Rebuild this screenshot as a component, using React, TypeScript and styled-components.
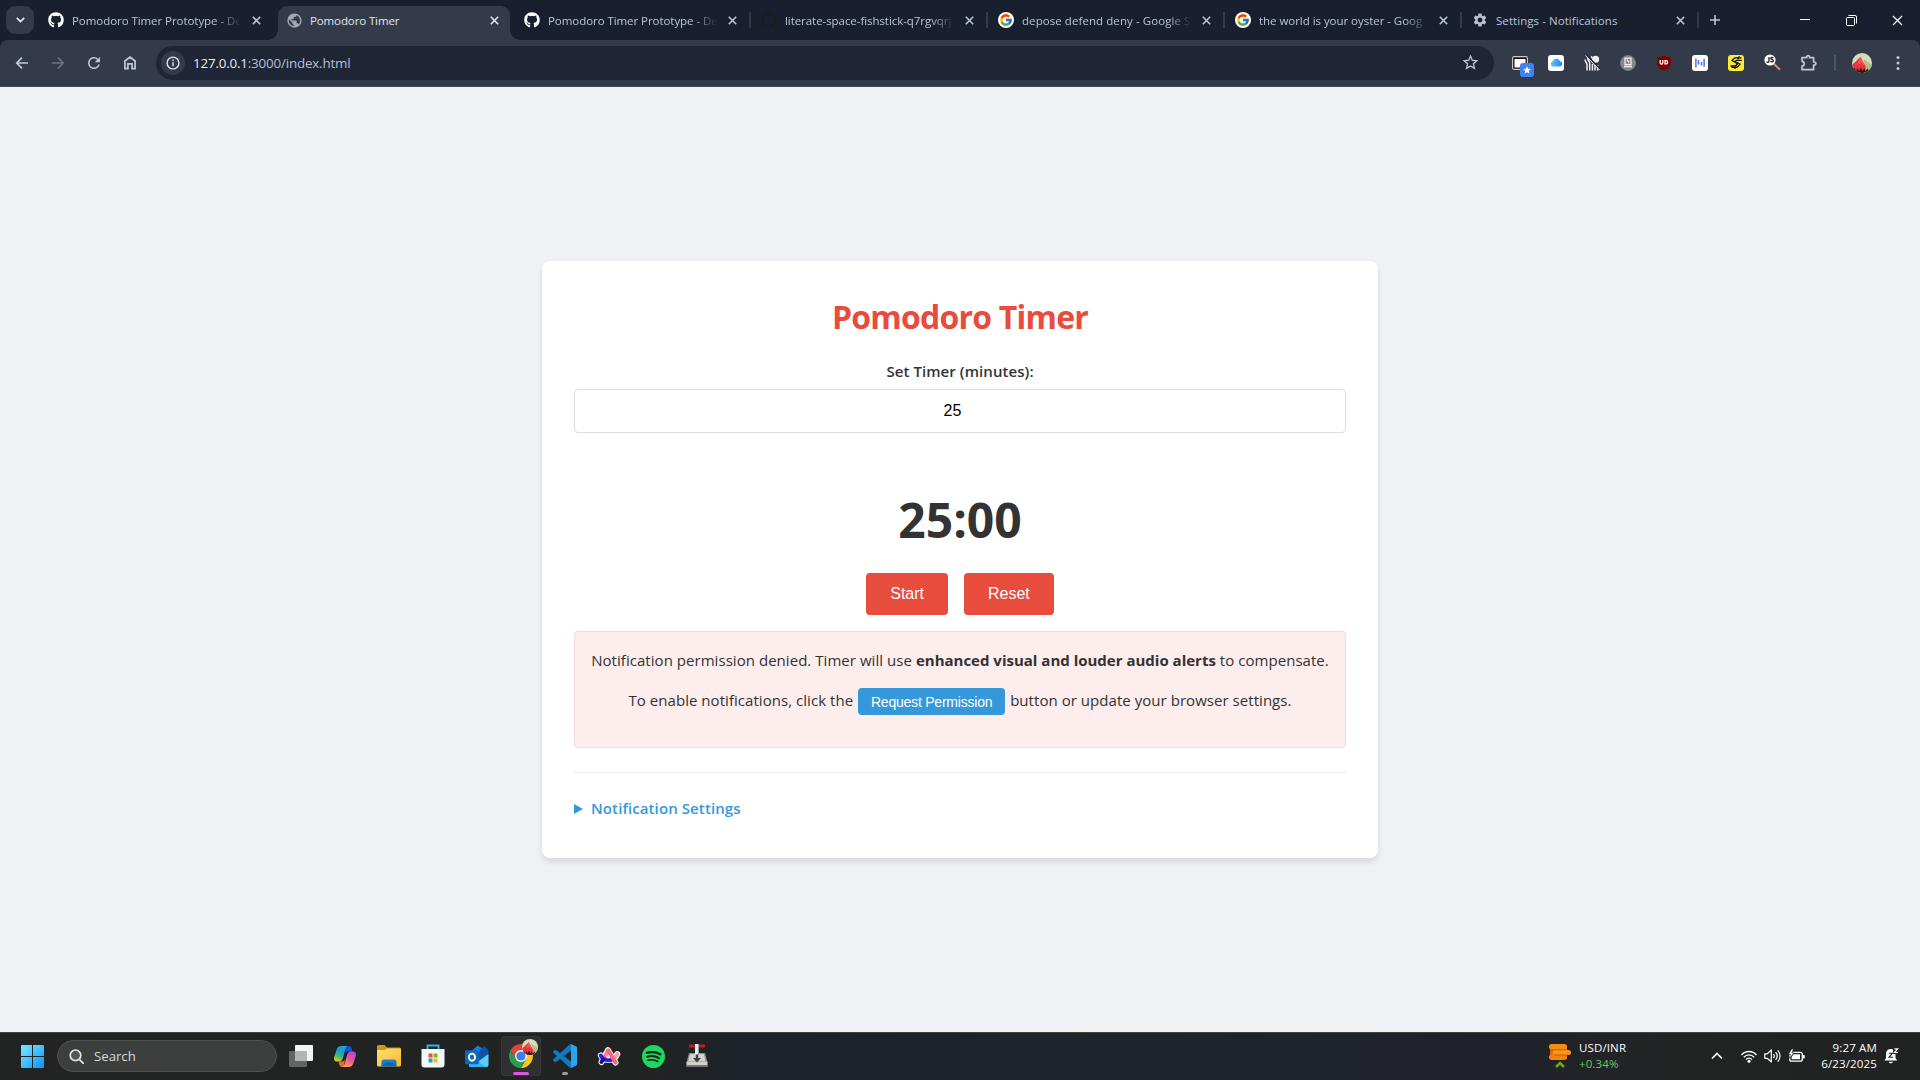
import React from 'react';
import styled, { createGlobalStyle, css } from 'styled-components';
import { FaGithub } from 'react-icons/fa';
import { FcGoogle } from 'react-icons/fc';
import { MdPublic, MdSettings, MdStarBorder, MdRefresh } from 'react-icons/md';

const ui = '"Open Sans", "Noto Sans", sans-serif';
const arial = '"Liberation Sans", Arial, sans-serif';

const GlobalStyle = createGlobalStyle`
  *, *::before, *::after { box-sizing: border-box; }
  body { margin: 0; background: #f0f1f5; overflow: hidden; }
  svg { display: block; flex: none; }
`;

const Screen = styled.div`
  display: flex;
  flex-direction: column;
  width: 1920px;
  height: 1080px;
  overflow: hidden;
  font-family: ${ui};
`;

/* ---------- Browser tab strip ---------- */

const TabStrip = styled.header`
  display: flex;
  flex: none;
  height: 40px;
  padding-left: 6px;
  background: #182030;
  color: #bcc3d9;
`;

const TabSearch = styled.button`
  display: grid;
  place-items: center;
  width: 28px;
  height: 28px;
  margin: 6px 6px 0 0;
  padding: 0;
  border: 0;
  border-radius: 9px;
  background: #333b4b;
  color: #e4e7ef;
`;

const TabList = styled.div`
  display: flex;
  gap: 5px;
  padding-top: 6px;
`;

const Tab = styled.div<{ $active?: boolean; $divided?: boolean }>`
  position: relative;
  display: flex;
  align-items: center;
  width: 232px;
  height: 34px;
  margin-right: ${p => (p.$divided ? 0 : 1)}px;
  padding: 0 8px 6px;
  ${p => p.$active && css`
    background: #333b4b;
    color: #e3e6ee;
    border-radius: 9px 9px 0 0;
    &::before, &::after {
      content: '';
      position: absolute;
      bottom: 0;
      width: 10px;
      height: 10px;
    }
    &::before {
      left: -10px;
      background: radial-gradient(circle at 0 0, transparent 9.5px, #333b4b 10px);
    }
    &::after {
      right: -10px;
      background: radial-gradient(circle at 100% 0, transparent 9.5px, #333b4b 10px);
    }
  `}
  ${p => p.$divided && css`
    &::after {
      content: '';
      position: absolute;
      right: -3px;
      top: 6px;
      width: 2px;
      height: 16px;
      background: #333b4b;
    }
  `}
`;

const Favicon = styled.span<{ $color?: string; $disc?: boolean }>`
  display: grid;
  place-items: center;
  flex: none;
  width: 16px;
  height: 16px;
  margin-right: 8px;
  border-radius: 50%;
  color: ${p => p.$color || '#fff'};
  background: ${p => (p.$disc ? '#fff' : 'transparent')};
`;

const TabTitle = styled.span<{ $spacing: number; $fade?: boolean }>`
  flex: none;
  width: 172px;
  padding-top: 1px;
  white-space: nowrap;
  font-size: 11.5px;
  line-height: 20px;
  letter-spacing: ${p => p.$spacing}px;
  ${p => p.$fade && css`
    -webkit-mask-image: linear-gradient(90deg, #000 146px, transparent 169px);
    mask-image: linear-gradient(90deg, #000 146px, transparent 169px);
  `}
`;

const TabClose = styled.span`
  display: grid;
  place-items: center;
  width: 16px;
  height: 16px;
  margin-left: 4px;
`;

const NewTab = styled.div`
  display: grid;
  place-items: center;
  width: 28px;
  height: 28px;
  margin: 6px 0 0 5px;
`;

const WindowControls = styled.div`
  display: flex;
  margin-left: auto;
  color: #fff;
`;

const WindowButton = styled.div`
  display: grid;
  place-items: center;
  width: 46px;
  height: 40px;
`;

/* ---------- Browser toolbar ---------- */

const ToolbarFrame = styled.div`
  flex: none;
  background: #182030;
`;

const Toolbar = styled.div`
  display: flex;
  align-items: center;
  height: 47px;
  padding: 0 4px 1px;
  border-bottom: 1px solid #474e5c;
  border-radius: 8px 8px 0 0;
  background: #333b4b;
  color: #c0c7dc;
`;

const NavButton = styled.div<{ $dim?: boolean }>`
  display: grid;
  place-items: center;
  width: 36px;
  height: 34px;
  color: ${p => (p.$dim ? '#6c7384' : '#c0c7dc')};
`;

const Omnibox = styled.div`
  display: flex;
  align-items: center;
  width: 1338px;
  height: 34px;
  margin: 0 8px;
  padding: 0 14px 0 5px;
  border-radius: 17px;
  background: #1e2636;
`;

const SiteInfo = styled.div`
  display: grid;
  place-items: center;
  width: 24px;
  height: 24px;
  margin-right: 8px;
  border-radius: 50%;
  background: #333b4b;
  color: #e1e4ec;
`;

const Url = styled.div`
  flex: 1;
  font-size: 13.4px;
  line-height: 20px;
  letter-spacing: -0.19px;
  color: #b7bed3;
`;

const UrlHost = styled.span`
  color: #e9ebf2;
`;

const Extension = styled.div`
  position: relative;
  display: grid;
  place-items: center;
  width: 36px;
  height: 34px;
`;

const ExtensionBadge = styled.span`
  position: absolute;
  left: 18px;
  top: 17px;
  display: grid;
  place-items: center;
  width: 14px;
  height: 14px;
  border-radius: 3px;
  background: #3f83f1;
`;

const ExtensionTile = styled.span<{ $bg: string }>`
  display: grid;
  place-items: center;
  width: 16px;
  height: 16px;
  border-radius: 3px;
  background: ${p => p.$bg};
`;

const ToolbarDivider = styled.div`
  width: 2px;
  height: 16px;
  margin: 0 8px;
  background: #4c5567;
`;

/* ---------- Page ---------- */

const Page = styled.main`
  display: flex;
  flex: 1;
  flex-direction: column;
  align-items: center;
  padding-top: 174px;
  background: #f0f1f5;
`;

const Card = styled.section`
  width: 836px;
  height: 597px;
  padding: 34px 32px 0;
  border-radius: 8px;
  background: #fff;
  box-shadow: 0 4px 6px rgba(0, 0, 0, 0.1);
  color: #333;
`;

const Title = styled.h1`
  margin: 0 0 21px;
  font-size: 32px;
  font-weight: 700;
  line-height: 43px;
  letter-spacing: -0.78px;
  text-align: center;
  color: #e74c3c;
`;

const FieldLabel = styled.label`
  display: block;
  margin: 0 0 5px;
  font-size: 15px;
  font-weight: 600;
  line-height: 25px;
  letter-spacing: 0.07px;
  text-align: center;
`;

const MinutesInput = styled.input`
  display: block;
  width: 100%;
  height: 44px;
  padding: 0 15px 0 0;
  border: 1px solid #ddd;
  border-radius: 4px;
  background: #fff;
  font: 16px ${arial};
  text-align: center;
  color: #000;
  outline: none;
`;

const Countdown = styled.div`
  margin-top: 55px;
  font-size: 48px;
  font-weight: 700;
  line-height: 64px;
  text-align: center;
`;

const Actions = styled.div`
  display: flex;
  justify-content: center;
  gap: 16px;
  margin-top: 21px;
`;

const ActionButton = styled.button`
  height: 42px;
  padding: 0 24px;
  border: 0;
  border-radius: 4px;
  background: #e74c3c;
  font: 16px ${arial};
  color: #fff;
`;

const Notice = styled.div`
  height: 117px;
  margin-top: 16px;
  padding-top: 16px;
  border: 1px solid #f9d9d8;
  border-radius: 4px;
  background: #fdeded;
  font-size: 15px;
  line-height: 24px;
  letter-spacing: 0.045px;
  text-align: center;
  white-space: nowrap;
`;

const NoticeRow = styled.div`
  display: flex;
  justify-content: center;
  gap: 5px;
  margin-top: 16px;
`;

const PermissionButton = styled.button`
  width: 147px;
  height: 27px;
  padding: 0;
  border: 0;
  border-radius: 4px;
  background: #3498db;
  font: 14px ${arial};
  letter-spacing: -0.22px;
  color: #fff;
`;

const Strong = styled.strong`
  font-weight: 700;
  letter-spacing: 0;
`;

const SettingsSection = styled.div`
  margin-top: 24px;
  padding-top: 23px;
  border-top: 1px solid #eee;
`;

const SettingsSummary = styled.div`
  display: flex;
  align-items: center;
  gap: 8px;
  font-size: 15px;
  font-weight: 600;
  line-height: 24px;
  letter-spacing: 0.1px;
  color: #3498db;
`;

const Disclosure = styled.span`
  width: 0;
  height: 0;
  margin-top: 1px;
  border-left: 9px solid #3498db;
  border-top: 5px solid transparent;
  border-bottom: 5px solid transparent;
`;

/* ---------- Taskbar ---------- */

const Taskbar = styled.footer`
  display: flex;
  flex: none;
  align-items: center;
  height: 48px;
  padding: 0 0 1px 10px;
  border-top: 1px solid #414242;
  background: linear-gradient(90deg, #222423 0, #212323 34%, #1d232b 39%, #1e242a 60%, #20222a 80%, #222424 87%, #212323 100%);
  color: #fff;
`;

const StartButton = styled.div`
  display: grid;
  place-items: center;
  width: 47px;
  height: 40px;
  padding: 1px 2px 0 0;
`;

const SearchPill = styled.div`
  display: flex;
  align-items: center;
  gap: 10px;
  width: 220px;
  height: 32px;
  padding-left: 11px;
  border: 1px solid #4e504f;
  border-radius: 16px;
  background: #3d3f3e;
  font-size: 13.2px;
  line-height: 20px;
  color: #d6d7d6;
`;

const AppRow = styled.div`
  display: flex;
  gap: 4px;
  margin-left: 4px;
`;

const AppButton = styled.div<{ $active?: boolean; $running?: boolean }>`
  position: relative;
  display: grid;
  place-items: center;
  width: 40px;
  height: 40px;
  border-radius: 4px;
  ${p => p.$active && css`
    background: #2f3131;
    box-shadow: inset 0 0 0 1px #363838;
  `}
  ${p => (p.$active || p.$running) && css`
    &::after {
      content: '';
      position: absolute;
      left: 50%;
      bottom: 1px;
      width: ${p.$active ? 16 : 6}px;
      height: 3px;
      border-radius: 2px;
      background: ${p.$active ? '#d957e3' : '#9a9b9b'};
      transform: translateX(-50%);
    }
  `}
`;

const ProfileBadge = styled.span`
  position: absolute;
  left: 21px;
  top: 3px;
`;

const RateWidget = styled.div`
  display: flex;
  align-items: center;
  gap: 8px;
  margin-left: auto;
  margin-right: 85px;
`;

const StackedText = styled.div<{ $right?: boolean }>`
  display: flex;
  flex-direction: column;
  font-size: 11.5px;
  line-height: 16px;
  letter-spacing: 0.15px;
  text-align: ${p => (p.$right ? 'right' : 'left')};
`;

const Gain = styled.span`
  color: #6ccb5f;
`;

const Tray = styled.div`
  display: flex;
  align-items: center;
  gap: 7px;
  margin-right: 16px;
`;

const TrayChevron = styled.div`
  margin-right: 18px;
`;

const Clock = styled.div`
  margin-right: 7px;
`;

const Bell = styled.div`
  margin-right: 21px;
`;

/* ---------- Drawings ---------- */

const Cross = ({ size = 9, width = 1.6 }: { size?: number; width?: number }) => (
  <svg width={size} height={size} viewBox="0 0 9 9" stroke="currentColor" strokeWidth={width}>
    <path d="M.8.8l7.4 7.4M8.2.8L.8 8.2" />
  </svg>
);

const Arrow = ({ flip }: { flip?: boolean }) => (
  <svg width="14" height="14" viewBox="0 0 14 14" fill="none" stroke="currentColor" strokeWidth="1.7"
    transform={flip ? 'scale(-1 1)' : undefined}>
    <path d="M13 7H2.2M7 1.7L1.8 7 7 12.3" />
  </svg>
);

const Home = () => (
  <svg width="14" height="15" viewBox="0 0 14 15" fill="none" stroke="currentColor" strokeWidth="1.7">
    <path d="M1.9 6L7 2l5.1 4v7.6H9.1V8.8H4.9v4.8h-3z" />
  </svg>
);

const Avatar = ({ size, id }: { size: number; id: string }) => (
  <svg width={size} height={size} viewBox="0 0 20 20">
    <clipPath id={id}><circle cx="10" cy="10" r="10" /></clipPath>
    <g clipPath={`url(#${id})`}>
      <path fill="#d8dbb8" d="M0 0h20v20H0z" />
      <path fill="#b4bf86" d="M12 6l8 6v8h-8z" />
      <path fill="#e93440" d="M0 12l8.500-8 5.500 10-2 6H0z" />
      <path fill="#f6545b" d="M8.500 4L5 12l4-2 4 3z" />
      <path fill="#33160f" d="M1 17l1.500-2.500L4 18l1.500-3L7 18l2-3.500 1.500 3.500 2-3 1 3 2-2.500 2 3V20H1z" />
    </g>
  </svg>
);

const WindowExtension = () => (
  <svg width="16" height="14" viewBox="0 0 16 14">
    <rect x=".6" y=".6" width="14.800" height="12.800" rx="1.500" fill="#151515" stroke="#cfcfbf" strokeWidth="1.100" />
    <path fill="#fff" d="M2.500 3h11v8.500h-11z" />
  </svg>
);

const Star = () => (
  <svg width="8" height="8" viewBox="0 0 10 10">
    <path fill="#fff" d="M5 .2l1.400 3.200 3.400.3-2.600 2.300.8 3.500L5 7.700 2 9.500l.8-3.500L.2 3.700l3.400-.3z" />
  </svg>
);

const Cloud = () => (
  <svg width="13" height="9" viewBox="0 0 13 9">
    <defs>
      <linearGradient id="cloud" x1="0" x2="1"><stop stopColor="#67c5fa" /><stop offset="1" stopColor="#2484ea" /></linearGradient>
    </defs>
    <path fill="url(#cloud)" d="M3 8.600A2.700 2.700 0 0 1 2.600 3.400 4 4 0 0 1 10 3.300a2.700 2.700 0 0 1 .2 5.300z" />
  </svg>
);

const Stripes = () => (
  <svg width="16" height="16" viewBox="0 0 16 16" fill="none" stroke="#efefef" strokeWidth="1.500">
    <path d="M3 15.500V10C3 7 1 7 1 4.500M5.700 15.500V8.500C5.700 6 3.700 6 3.700 3M8.400 15.500V9M11 15.500V10M13.700 15.500V10" />
    <path d="M7 1.500c2 1 2 3 1.400 6" />
    <circle cx="11.600" cy="4.300" r="2.800" fill="#efefef" />
    <path stroke="#222834" strokeWidth="1.600" d="M3 .5l13 13.500" />
    <path strokeWidth="1" d="M1.500.5L15.500 15" />
  </svg>
);

const GreyDisc = () => (
  <svg width="16" height="16" viewBox="0 0 16 16">
    <circle cx="8" cy="8" r="7.600" fill="#858889" stroke="#69838f" strokeWidth=".8" />
    <rect x="5" y="3.200" width="6" height="6.300" fill="none" stroke="#f2f2f2" strokeWidth="1.200" />
    <path d="M7 4.700l2 2.600M4 11.500h8" stroke="#f2f2f2" strokeWidth="1.300" />
  </svg>
);

const Shield = () => (
  <svg width="16" height="16" viewBox="0 0 16 16">
    <path fill="#800000" d="M8 .3c2 1.400 4.200 1.800 6.800 1.900v6c0 3.400-3 6-6.800 7.600C4.200 14.200 1.200 11.600 1.200 8.200v-6C3.800 2.100 6 1.700 8 .3z" />
    <path fill="none" stroke="#fff" strokeWidth="1.300" d="M4.200 5v2.800a1.300 1.300 0 0 0 2.600 0V5M9 8.900V5.700h1a1.600 1.600 0 0 1 0 3.200z" />
  </svg>
);

const Bars = () => (
  <svg width="10" height="10" viewBox="0 0 10 10">
    <path stroke="#496fe6" strokeWidth="1.500" d="M.9.5v9M3.500 2v4.500M6.500 3.800v3.700M9.100.8v8" />
  </svg>
);

const Knot = () => (
  <svg width="12" height="13" viewBox="0 0 12 13" fill="none" stroke="#111" strokeWidth="1.300">
    <path d="M11.500 1.800H5L2 4.500l5.500 3.300-2 2.200H.5" />
    <path d="M11.800 4.300H6.800L5 5.300l5 2.900-3 3.200H1.500M9.500.3L7.500 3M4.500 12.700l2-2.200" />
  </svg>
);

const ScriptLens = () => (
  <svg width="17" height="17" viewBox="0 0 17 17">
    <path stroke="#e98a4f" strokeWidth="2" d="M9.500 9.500l6.500 6.300" />
    <circle cx="6" cy="6" r="5.600" fill="#fff" />
    <path fill="none" stroke="#1c1c1c" strokeWidth="1.300" d="M5 3v4.300c0 1.400-2 1.400-2.300.3M9.300 3.900C8.500 3 6.700 3.200 6.800 4.400c.1 1.300 2.500.8 2.500 2.300 0 1.300-2 1.500-2.800.5" />
  </svg>
);

const Puzzle = () => (
  <svg width="18" height="18" viewBox="0 0 18 18" fill="none" stroke="currentColor" strokeWidth="1.700">
    <path strokeLinejoin="round" d="M3 3.700h4.600V3.100a1.500 1.500 0 0 1 3 0v.6h4v4.300h.7a1.600 1.600 0 0 1 0 3.200h-.7v4.500H3v-3.600c2.900-.3 2.900-4.400 0-4.700z" />
  </svg>
);

const WindowsLogo = () => (
  <svg width="23" height="23" viewBox="0 0 23 23">
    <defs>
      <linearGradient id="win" x1="0" y1="0" x2="1" y2="1">
        <stop stopColor="#7bebff" /><stop offset="1" stopColor="#0a94fb" />
      </linearGradient>
    </defs>
    <path fill="url(#win)" d="M1 0h10v11H0V1a1 1 0 0 1 1-1zM12 0h10a1 1 0 0 1 1 1v10H12zM0 12h11v11H1a1 1 0 0 1-1-1zM12 12h11v10a1 1 0 0 1-1 1H12z" />
  </svg>
);

const Magnifier = () => (
  <svg width="15" height="15" viewBox="0 0 15 15" fill="none" stroke="#e2e3e2" strokeWidth="1.700">
    <circle cx="6.500" cy="6.300" r="5.300" fill="#565857" />
    <path d="M10.300 10.300l4 4" strokeLinecap="round" />
  </svg>
);

const TaskView = () => (
  <svg width="24" height="22" viewBox="0 0 24 22">
    <rect x="6" width="18" height="16" rx="1" fill="#f4f4f4" />
    <rect y="6" width="18" height="16" rx="1" fill="#636464" />
    <path fill="#b4b4b4" d="M6 6h12v10H6z" />
  </svg>
);

const Copilot = () => (
  <svg width="22" height="21" viewBox="0 0 22 21">
    <defs>
      <linearGradient id="cpa" x1=".6" y1="0" x2=".2" y2="1">
        <stop stopColor="#17a3ee" /><stop offset=".35" stopColor="#159ad0" /><stop offset=".7" stopColor="#52b96b" /><stop offset="1" stopColor="#f2cf17" />
      </linearGradient>
      <linearGradient id="cpb" x1=".7" y1="0" x2=".3" y2="1">
        <stop stopColor="#a347e0" /><stop offset=".5" stopColor="#f0548f" /><stop offset="1" stopColor="#ff9b55" />
      </linearGradient>
    </defs>
    <path fill="#1a50d4" d="M12 0h3c1.700 0 2.300 1.500 2.700 3l.7 2.500h-4c-2 0-2.600 1-3 3z" />
    <path fill="url(#cpa)" d="M7.500 0h6.300c-1.500.5-2 1.500-2.500 3.300L9.500 10c-.7 3-1.700 5.500-4 5.500H3C.5 15.500-.4 13.500.2 11L2.500 4C3.400 1.500 4.700 0 7.500 0z" />
    <path fill="#f2662c" d="M10 21H8c-1.700 0-2.500-1.500-2.900-3l-.6-2.500H8c2 0 2.300-1 2.800-3z" />
    <path fill="url(#cpb)" d="M14.500 21H8.200c1.500-.5 2-1.500 2.500-3.300L12.500 11c.7-3 1.700-5.500 4-5.500H19c2.500 0 3.400 2 2.800 4.500L19.500 17c-.9 2.500-2.200 4-5 4z" />
  </svg>
);

const Folder = () => (
  <svg width="24" height="22" viewBox="0 0 24 22">
    <defs>
      <linearGradient id="fold" x1="0" y1="0" x2="1" y2="1"><stop stopColor="#ffdf73" /><stop offset="1" stopColor="#f8ba2b" /></linearGradient>
      <linearGradient id="foldb" x1="0" x2="0" y1="0" y2="1"><stop stopColor="#1a86d2" /><stop offset="1" stopColor="#1166b0" /></linearGradient>
    </defs>
    <path fill="#d39413" d="M0 1.500A1.500 1.500 0 0 1 1.500 0h6l2.500 2.500h12.500A1.500 1.500 0 0 1 24 4v8H0z" />
    <path fill="url(#fold)" d="M0 5h8l2-1.500h14V20a1.500 1.500 0 0 1-1.500 1.500h-21A1.500 1.500 0 0 1 0 20z" />
    <path fill="url(#foldb)" d="M4.500 21.500V17a2.500 2.500 0 0 1 2.500-2.500h10a2.500 2.500 0 0 1 2.500 2.500v4.500z" />
    <path fill="#0c57a0" d="M8 18h8v1.600H8z" />
  </svg>
);

const Store = () => (
  <svg width="24" height="24" viewBox="0 0 24 24">
    <path fill="none" stroke="#2bb6ed" strokeWidth="1.800" d="M6.500 6V1.500h11V6" />
    <path fill="#f6f7f8" d="M.5 5h23v15.500a3 3 0 0 1-3 3h-17a3 3 0 0 1-3-3z" />
    <path fill="#f1511b" d="M7.500 9.500h4v4h-4z" /><path fill="#80b911" d="M12.500 9.500h4v4h-4z" />
    <path fill="#159ee0" d="M7.500 14.500h4v4h-4z" /><path fill="#fbb813" d="M12.500 14.500h4v4h-4z" />
  </svg>
);

const Outlook = () => (
  <svg width="24" height="23" viewBox="0 0 25 23">
    <path fill="#1580d3" d="M5 7l8.500-7L24 7l-10 9z" />
    <path fill="#1251a5" d="M12 9l8-8.500L24.500 5v6L16 16z" />
    <path fill="#36b4f1" d="M4 10l10 7 10-8v11.500a2 2 0 0 1-2 2H6a2 2 0 0 1-2-2z" />
    <path fill="#58cdf8" d="M24.500 9.500V20a2.500 2.500 0 0 1-2 2.500L13 17z" />
    <rect y="5" width="14.500" height="14.500" rx="1.500" fill="#0d67bd" />
    <ellipse cx="7.300" cy="12.200" rx="3.200" ry="3.700" fill="none" stroke="#fff" strokeWidth="1.900" />
  </svg>
);

const Chrome = () => (
  <svg width="24" height="24" viewBox="0 0 24 24">
    <path fill="#e0453a" d="M1.610 6A12 12 0 0 1 22.390 6H12L6.800 15z" />
    <path fill="#fcc51f" d="M22.390 6A12 12 0 0 1 12 24l5.200-9L12 6z" />
    <path fill="#2d9d4c" d="M12 24A12 12 0 0 1 1.610 6L6.800 15h10.400z" />
    <circle cx="12" cy="12" r="6" fill="#fff" />
    <circle cx="12" cy="12" r="4.600" fill="#3c7ff0" />
  </svg>
);

const VsCode = () => {
  const d = 'M23.15 2.587L18.21.21a1.494 1.494 0 0 0-1.705.29l-9.46 8.63-4.12-3.128a.999.999 0 0 0-1.276.057L.327 7.261A1 1 0 0 0 .326 8.74L3.899 12 .326 15.26a1 1 0 0 0 .001 1.479L1.65 17.94a.999.999 0 0 0 1.276.057l4.12-3.128 9.46 8.63a1.492 1.492 0 0 0 1.704.29l4.942-2.377A1.5 1.5 0 0 0 24 20.06V3.939a1.5 1.5 0 0 0-.85-1.352zm-5.146 14.861L10.826 12l7.178-5.448v10.896z';
  return (
    <svg width="24" height="24" viewBox="0 0 24 24">
      <clipPath id="vsRight"><path d="M18 0h6v24h-6z" /></clipPath>
      <path fill="#0f79c2" d={d} />
      <path fill="#2ba4ee" d={d} clipPath="url(#vsRight)" />
    </svg>
  );
};

const Arc = () => (
  <svg width="24" height="21" viewBox="0 0 24 21" fill="none" strokeLinecap="round" strokeLinejoin="round">
    <g stroke="#fff" strokeWidth="6">
      <path d="M4.500 16L11 4.200 18.500 16.500M3.800 9.500c3 6 13 6.500 16.500-1.500" />
    </g>
    <path stroke="#ff7d8e" strokeWidth="4" d="M11 4.500L6.500 13" />
    <path stroke="#2a20e8" strokeWidth="4" d="M3.800 9.500c2 4.500 8 6 12 3.500" />
    <path stroke="#1a1290" strokeWidth="4" d="M6 13.500L4.500 16" />
    <path stroke="#f89aa6" strokeWidth="4" d="M16.500 12.500c1.800-1 3-2.600 3.800-4.500" />
    <path stroke="#fb6573" strokeWidth="4" d="M11.300 4.500l7.200 12" />
  </svg>
);

const Spotify = () => (
  <svg width="23" height="23" viewBox="0 0 23 23" fill="none" stroke="#172019" strokeLinecap="round">
    <circle cx="11.500" cy="11.500" r="11.500" fill="#1ed760" stroke="none" />
    <path strokeWidth="2.300" d="M4.800 7.800c4.600-1.300 9.600-.8 13.600 1.500" />
    <path strokeWidth="2" d="M5.300 11.700c4-1.100 8.300-.6 11.700 1.400" />
    <path strokeWidth="1.600" d="M5.800 15.300c3.400-.9 6.900-.5 9.900 1.200" />
  </svg>
);

const Installer = () => (
  <svg width="22" height="24" viewBox="0 0 22 24">
    <path fill="#8f8f8e" d="M3 9h16l2.500 9.500H.5z" />
    <path fill="#d2d2d0" d="M4 10h14l1.500 7h-17z" />
    <rect x=".5" y="17.500" width="21" height="5.500" rx="1" fill="#d0d0ce" />
    <path fill="#747473" d="M1 21h20v2H1z" />
    <path fill="#c41a1b" d="M3 .5h16v3H3z" />
    <path fill="#ececec" d="M9 0h4v11H9z" />
    <path fill="#9a9a9a" d="M12 0h1v11h-1z" />
    <path fill="#3d3f42" d="M9.800 10.500h2.400v3.500H15L11 18.500 7 14h2.800z" />
  </svg>
);

const Coins = () => (
  <svg width="22" height="24" viewBox="0 0 22 24">
    <path fill="#d86a02" d="M1 3h17v12H1z" />
    <rect x="0" y="0" width="18" height="5.500" rx="2.700" fill="#f58c12" />
    <rect x="3.500" y="6" width="18.500" height="5" rx="2.500" fill="#fb961c" />
    <rect x="0" y="10.500" width="18" height="5.500" rx="2.700" fill="#f2830a" />
    <path stroke="#b95a00" strokeWidth=".8" d="M2 5.800h15M5 11h14" />
    <path fill="none" stroke="#67ae10" strokeWidth="2.600" d="M7 23l4-4 4 4" />
  </svg>
);

const Chevron = ({ up }: { up?: boolean }) => (
  <svg width={up ? 12 : 9} height={up ? 8 : 6} viewBox={up ? '0 0 12 8' : '0 0 9 6'} fill="none" stroke="currentColor" strokeWidth={up ? 1.6 : 1.8}>
    <path d={up ? 'M1 6.500l5-5 5 5' : 'M.8.900l3.700 3.700L8.200.900'} />
  </svg>
);

const Wifi = () => (
  <svg width="16" height="13" viewBox="0 0 16 13" fill="none" stroke="#fff" strokeWidth="1.300">
    <path d="M.5 5C4.600.3 11.400.3 15.500 5M2.800 7.300c2.900-3.200 7.500-3.200 10.400 0M5.100 9.500c1.700-1.800 4.100-1.800 5.800 0" />
    <circle cx="8" cy="11.200" r="1.500" fill="#fff" stroke="none" />
  </svg>
);

const Speaker = () => (
  <svg width="17" height="14" viewBox="0 0 17 14" fill="none" stroke="#fff" strokeWidth="1.200" strokeLinejoin="round">
    <path d="M.8 4.800h2.500L7.300 1v12L3.300 9.300H.8zM9.500 5c.9 1.200.9 2.900 0 4.100M11.600 3.200c1.900 2.200 1.900 5.400 0 7.600M13.800 1.300c2.900 3.300 2.900 8.100 0 11.400" />
  </svg>
);

const Battery = () => (
  <svg width="17" height="14" viewBox="0 0 17 14">
    <rect x="1.700" y="3.300" width="12.600" height="8.900" rx="2" fill="none" stroke="#fff" strokeWidth="1.300" />
    <path fill="#fff" d="M15 6h1a.8.8 0 0 1 .8.800v2a.8.800 0 0 1-.8.800h-1zM5.500 5.300H12v4.900H3.700V8z" />
    <path fill="#fff" stroke="#212323" strokeWidth=".7" d="M3.500 0L.3 5.500h2L1.200 9.500l5-5.500H4L5.500 0z" />
  </svg>
);

const QuietBell = () => (
  <svg width="15" height="16" viewBox="0 0 15 16">
    <path fill="#fff" d="M.5 12.500L2 10V5.500C2 3 4 1 6.800 1c2.800 0 4.700 2 4.700 4.500V10l1.800 2.500zM4.800 13.800h4c-.5 2-3.500 2-4 0z" />
    <path fill="none" stroke="#212323" strokeWidth="1.100" d="M4.800 5.200h3.700L5 9.300h4" />
    <path fill="#212323" d="M9 0h6v6H9z" opacity=".95" />
    <path fill="none" stroke="#fff" strokeWidth="1.200" d="M10.500.8h3.300l-3.300 3.700h3.600" />
  </svg>
);

/* ---------- Content ---------- */

type TabInfo = { title: string; icon: React.ReactNode; spacing: number; active?: boolean; divided?: boolean; fade?: boolean };

const github = <Favicon><FaGithub size={16} /></Favicon>;
const google = <Favicon $disc><FcGoogle size={14} /></Favicon>;

const tabs: TabInfo[] = [
  { title: 'Pomodoro Timer Prototype - De', icon: github, spacing: -0.06, fade: true },
  { title: 'Pomodoro Timer', icon: <Favicon $color="#a3a7af"><MdPublic size={17} /></Favicon>, spacing: -0.12, active: true },
  { title: 'Pomodoro Timer Prototype - De', icon: github, spacing: -0.06, divided: true, fade: true },
  { title: 'literate-space-fishstick-q7rgvqrj', icon: <Favicon $color="#1c1c1f"><FaGithub size={16} /></Favicon>, spacing: -0.06, divided: true, fade: true },
  { title: 'depose defend deny - Google S', icon: google, spacing: 0.07, divided: true, fade: true },
  { title: 'the world is your oyster - Goog', icon: google, spacing: -0.04, divided: true, fade: true },
  { title: 'Settings - Notifications', icon: <Favicon $color="#b9c0d8"><MdSettings size={16} /></Favicon>, spacing: 0.06, divided: true },
];

export default function App() {
  return (
    <Screen>
      <GlobalStyle />
      <TabStrip>
        <TabSearch aria-label="Search tabs"><Chevron /></TabSearch>
        <TabList>
          {tabs.map((t, i) => (
            <Tab key={i} $active={t.active} $divided={t.divided}>
              {t.icon}
              <TabTitle $spacing={t.spacing} $fade={t.fade}>{t.title}</TabTitle>
              <TabClose><Cross /></TabClose>
            </Tab>
          ))}
        </TabList>
        <NewTab>
          <svg width="10" height="10" viewBox="0 0 10 10" stroke="currentColor" strokeWidth="1.600"><path d="M5 0v10M0 5h10" /></svg>
        </NewTab>
        <WindowControls>
          <WindowButton><svg width="10" height="10" viewBox="0 0 10 10"><path fill="#fff" d="M0 4h10v1H0z" /></svg></WindowButton>
          <WindowButton>
            <svg width="11" height="11" viewBox="0 0 11 11" fill="none" stroke="#fff">
              <rect x=".5" y="2.500" width="8" height="8" rx="1.200" /><path d="M2.500.5H9a1.500 1.500 0 0 1 1.500 1.500v6.500" />
            </svg>
          </WindowButton>
          <WindowButton><Cross size={11} width={0.95} /></WindowButton>
        </WindowControls>
      </TabStrip>

      <ToolbarFrame>
        <Toolbar>
          <NavButton><Arrow /></NavButton>
          <NavButton $dim><Arrow flip /></NavButton>
          <NavButton><MdRefresh size={18} /></NavButton>
          <NavButton><Home /></NavButton>
          <Omnibox>
            <SiteInfo>
              <svg width="14" height="14" viewBox="0 0 14 14" fill="none" stroke="currentColor" strokeWidth="1.400">
                <circle cx="7" cy="7" r="5.900" /><path d="M7 6.200v4M7 3.600v1.500" />
              </svg>
            </SiteInfo>
            <Url><UrlHost>127.0.0.1</UrlHost>:3000/index.html</Url>
            <MdStarBorder size={19} />
          </Omnibox>
          <Extension><WindowExtension /><ExtensionBadge><Star /></ExtensionBadge></Extension>
          <Extension><ExtensionTile $bg="#fff"><Cloud /></ExtensionTile></Extension>
          <Extension><Stripes /></Extension>
          <Extension><GreyDisc /></Extension>
          <Extension><Shield /></Extension>
          <Extension><ExtensionTile $bg="#fff"><Bars /></ExtensionTile></Extension>
          <Extension><ExtensionTile $bg="#ffea3a"><Knot /></ExtensionTile></Extension>
          <Extension><ScriptLens /></Extension>
          <Extension><Puzzle /></Extension>
          <ToolbarDivider />
          <Extension><Avatar size={20} id="avatarBar" /></Extension>
          <NavButton>
            <svg width="4" height="14" viewBox="0 0 4 14" fill="currentColor">
              <circle cx="2" cy="1.600" r="1.500" /><circle cx="2" cy="7" r="1.500" /><circle cx="2" cy="12.400" r="1.500" />
            </svg>
          </NavButton>
        </Toolbar>
      </ToolbarFrame>

      <Page>
        <Card>
          <Title>Pomodoro Timer</Title>
          <FieldLabel htmlFor="minutes">Set Timer (minutes):</FieldLabel>
          <MinutesInput id="minutes" defaultValue="25" />
          <Countdown>25:00</Countdown>
          <Actions>
            <ActionButton>Start</ActionButton>
            <ActionButton>Reset</ActionButton>
          </Actions>
          <Notice>
            Notification permission denied. Timer will use <Strong>enhanced visual and louder audio alerts</Strong> to compensate.
            <NoticeRow>
              <span>To enable notifications, click the</span>
              <PermissionButton>Request Permission</PermissionButton>
              <span>button or update your browser settings.</span>
            </NoticeRow>
          </Notice>
          <SettingsSection>
            <SettingsSummary><Disclosure />Notification Settings</SettingsSummary>
          </SettingsSection>
        </Card>
      </Page>

      <Taskbar>
        <StartButton><WindowsLogo /></StartButton>
        <SearchPill><Magnifier />Search</SearchPill>
        <AppRow>
          <AppButton><TaskView /></AppButton>
          <AppButton><Copilot /></AppButton>
          <AppButton><Folder /></AppButton>
          <AppButton><Store /></AppButton>
          <AppButton><Outlook /></AppButton>
          <AppButton $active><Chrome /><ProfileBadge><Avatar size={16} id="avatarTask" /></ProfileBadge></AppButton>
          <AppButton $running><VsCode /></AppButton>
          <AppButton><Arc /></AppButton>
          <AppButton><Spotify /></AppButton>
          <AppButton><Installer /></AppButton>
        </AppRow>
        <RateWidget>
          <Coins />
          <StackedText><span>USD/INR</span><Gain>+0.34%</Gain></StackedText>
        </RateWidget>
        <TrayChevron><Chevron up /></TrayChevron>
        <Tray><Wifi /><Speaker /><Battery /></Tray>
        <Clock><StackedText $right><span>9:27 AM</span><span>6/23/2025</span></StackedText></Clock>
        <Bell><QuietBell /></Bell>
      </Taskbar>
    </Screen>
  );
}
